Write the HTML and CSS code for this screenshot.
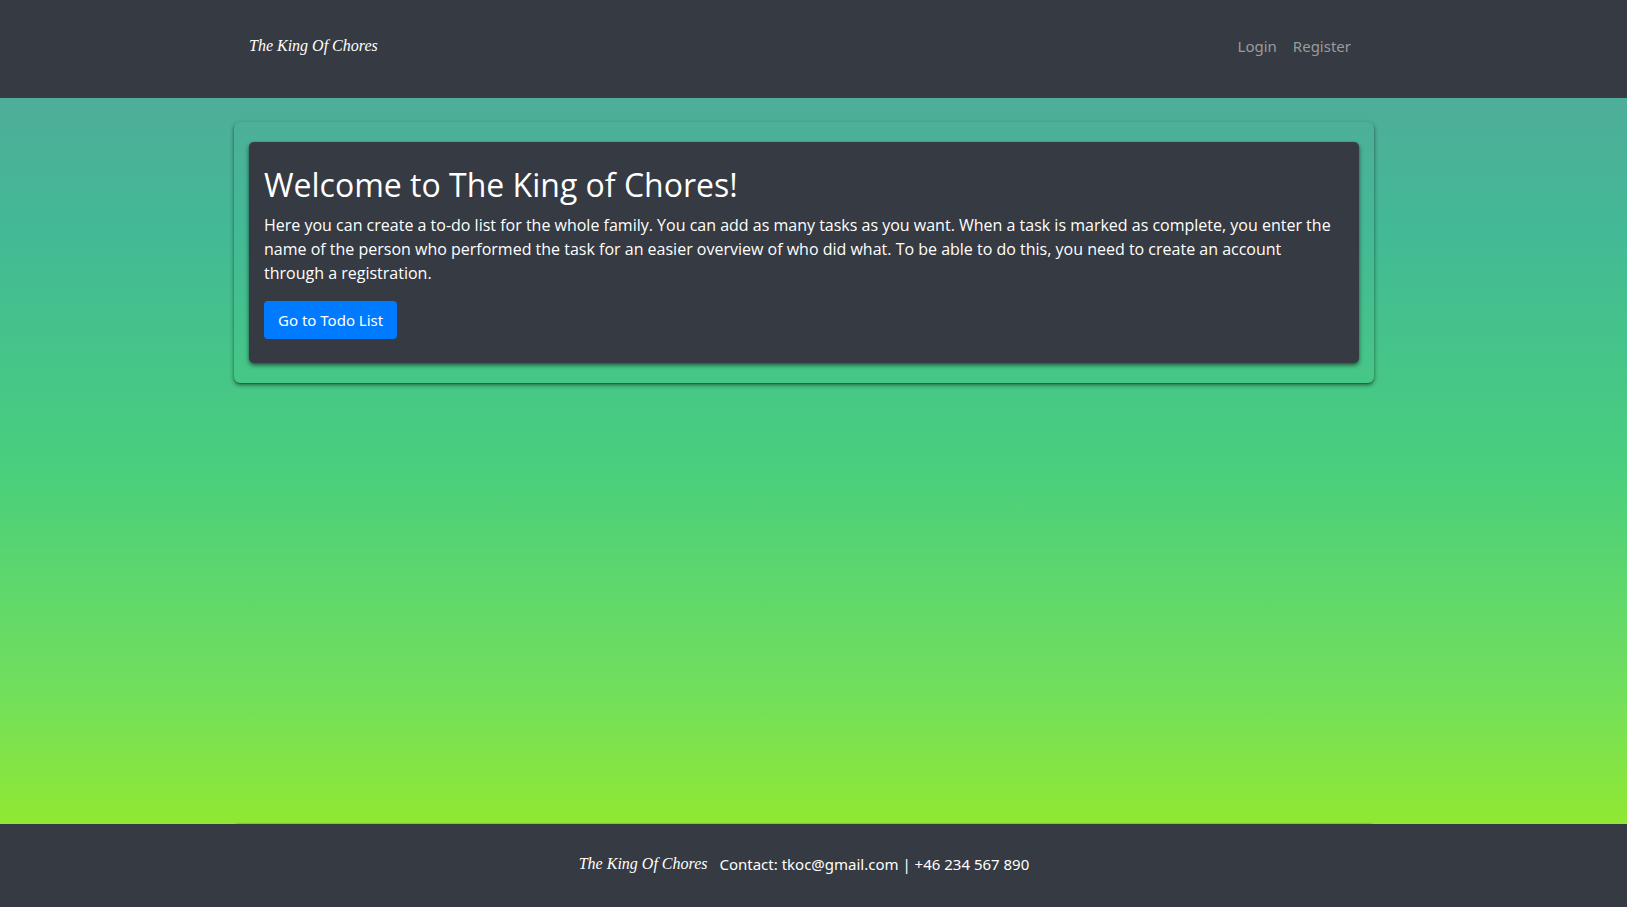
FILE: index.html
```html
<!DOCTYPE html>
<html lang="en">
<head>
<meta charset="utf-8">
<meta name="viewport" content="width=device-width, initial-scale=1">
<title>The King Of Chores</title>
<link rel="stylesheet" href="styles.css">
</head>
<body>
<header class="site-header">
  <nav class="container navbar">
    <a class="brand" href="#">The King Of Chores</a>
    <ul class="nav-links">
      <li><a href="#">Login</a></li>
      <li><a href="#">Register</a></li>
    </ul>
  </nav>
</header>
<main class="main">
  <section class="container panel">
    <div class="welcome">
      <h1>Welcome to The King of Chores!</h1>
      <p>Here you can create a to-do list for the whole family. You can add as many tasks as you want. When a task is marked as complete, you enter the name of the person who performed the task for an easier overview of who did what. To be able to do this, you need to create an account through a registration.</p>
      <button class="btn" type="button">Go to Todo List</button>
    </div>
  </section>
</main>
<footer class="site-footer">
  <div class="container footer-inner">
    <a class="brand" href="#">The King Of Chores</a>
    <span>Contact: tkoc@gmail.com | +46 234 567 890</span>
  </div>
</footer>
</body>
</html>
```
FILE: styles.css
```css
* { box-sizing: border-box; }

body {
  margin: 0;
  min-height: 100vh;
  display: flex;
  flex-direction: column;
  font-family: "Open Sans", "Noto Sans", sans-serif;
  font-size: 16px;
  line-height: 24px;
  color: #fff;
  background: #363a42;
}

.site-header,
.main,
.site-footer {
  padding-right: 19px;
}

.container {
  width: 100%;
  max-width: 1140px;
  margin: 0 auto;
}

.site-header {
  padding-top: 26px;
  padding-bottom: 32px;
  background: #363a42;
}

.navbar {
  display: flex;
  align-items: center;
  justify-content: space-between;
  min-height: 40px;
  padding: 0 15px;
}

.brand {
  font-family: "Liberation Serif", cursive;
  font-size: 16px;
  font-style: italic;
  color: #fff;
  text-decoration: none;
  white-space: nowrap;
}

.nav-links {
  display: flex;
  gap: 16px;
  margin: 0;
  padding: 0 8px;
  list-style: none;
  font-family: "Noto Sans", sans-serif;
  font-size: 15px;
}

.nav-links a {
  color: #999c9f;
  text-decoration: none;
}

.main {
  flex: 1;
  padding-top: 24px;
  background: linear-gradient(#4fad99 0%, #43b996 18%, #48ce7e 50%, #72df5c 82%, #90e832 100%);
}

.panel {
  padding: 20px 15px;
  border-radius: 6px;
  box-shadow: 0 2px 4px rgba(0, 0, 0, 0.5), 0 1px 1px rgba(0, 0, 0, 0.2);
}

.welcome {
  padding: 24px 15px;
  border-radius: 5px;
  background: #363a42;
  box-shadow: 0 2px 4px rgba(0, 0, 0, 0.6);
}

.welcome h1 {
  margin: 0 0 9px;
  font-size: 32px;
  font-weight: 400;
  line-height: 38px;
}

.welcome p {
  margin: 0 0 16px;
}

.btn {
  display: block;
  height: 38px;
  padding: 0 14px;
  border: 0;
  border-radius: 4px;
  font: 15px/24px "Noto Sans", sans-serif;
  color: #fff;
  background: #007bff;
  cursor: pointer;
}

.site-footer {
  background: #363a42;
}

.footer-inner {
  display: flex;
  align-items: center;
  justify-content: center;
  gap: 12px;
  min-height: 83px;
  padding-bottom: 3px;
  font-family: "Noto Sans", sans-serif;
  font-size: 15px;
  box-shadow: 0 -2px 2px -2px rgba(0, 0, 0, 0.4);
}
```
